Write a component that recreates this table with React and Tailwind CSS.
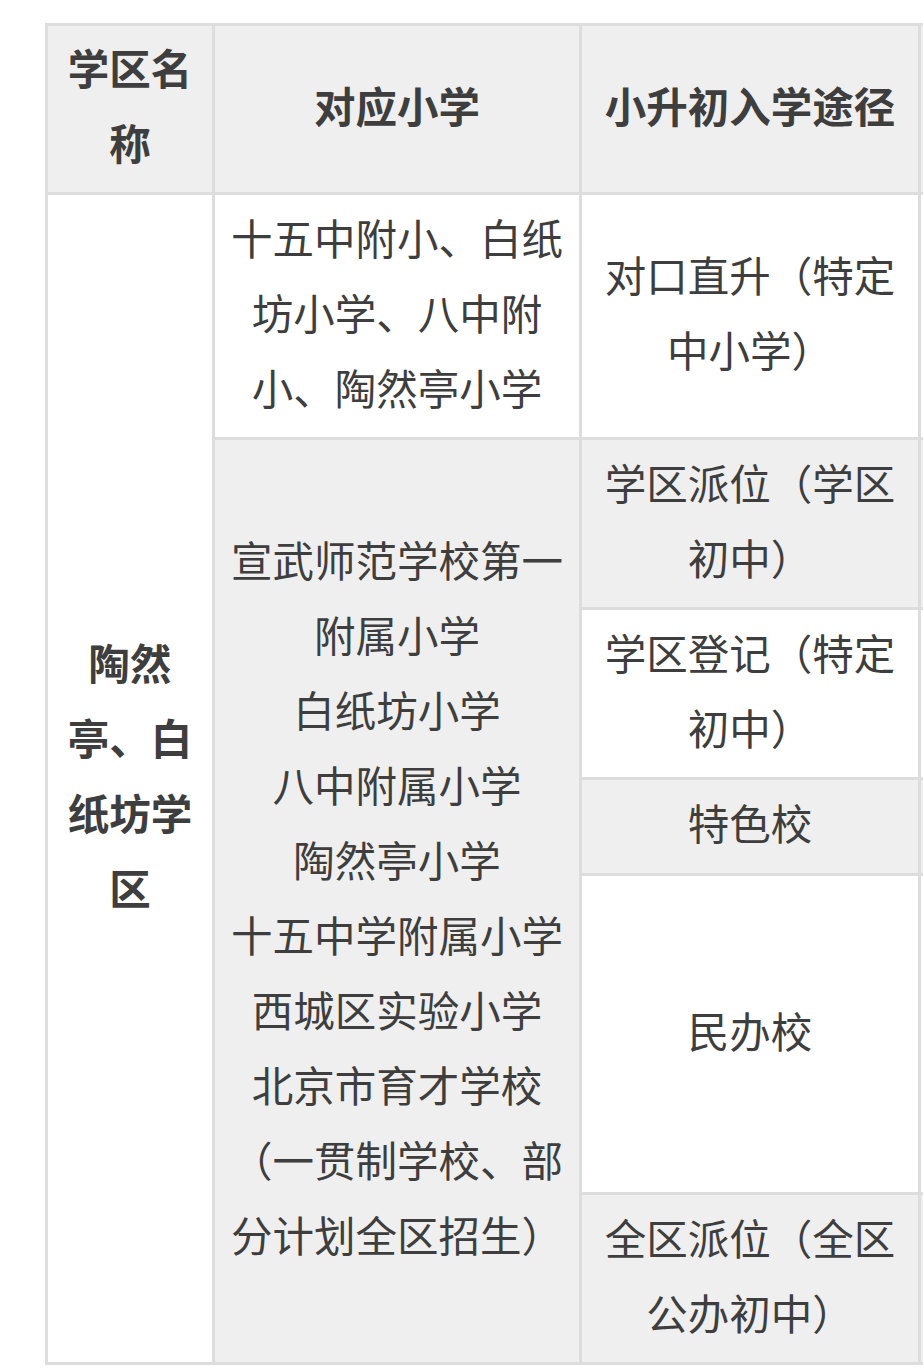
import React from 'react'

const font = { fontFamily: '"Noto Sans CJK SC", "Noto Sans", sans-serif' }

// stripe colours per row: header + 6 body rows
const GRAY = 'bg-[#efefef]'
const WHITE = 'bg-white'

function Cell({ className = '', children }) {
  return (
    <div className={`flex flex-col items-center justify-center px-[15px] pb-[8px] text-center text-[41.5px] leading-[75px] text-[#3e3e3e] ${className}`}>
      {children}
    </div>
  )
}

export default function App() {
  return (
    <div className="w-[923px] h-[1370px] overflow-hidden bg-white pl-[45px] pt-[23px]" style={font}>
      <div className="grid w-max gap-[3px] bg-[#dddddd] p-[3px] grid-cols-[164px_364px_336px_200px] grid-rows-[166px_242px_167px_167px_93px_316px_167px]">
        {/* header */}
        <Cell className={`${GRAY} font-bold col-start-1 row-start-1`}>学区名称</Cell>
        <Cell className={`${GRAY} font-bold col-start-2 row-start-1`}>对应小学</Cell>
        <Cell className={`${GRAY} font-bold col-start-3 row-start-1`}>小升初入学途径</Cell>
        <Cell className={`${GRAY} col-start-4 row-start-1`} />

        {/* district name spans every body row */}
        <Cell className={`${WHITE} font-bold col-start-1 row-start-2 row-span-6`}>陶然亭、白纸坊学区</Cell>

        {/* row 1 */}
        <Cell className={`${WHITE} col-start-2 row-start-2`}>十五中附小、白纸坊小学、八中附小、陶然亭小学</Cell>
        <Cell className={`${WHITE} col-start-3 row-start-2`}>对口直升（特定中小学）</Cell>
        <Cell className={`${WHITE} col-start-4 row-start-2`} />

        {/* schools list spans rows 2-6 */}
        <Cell className={`${GRAY} col-start-2 row-start-3 row-span-5`}>
          <span>宣武师范学校第一附属小学</span>
          <span>白纸坊小学</span>
          <span>八中附属小学</span>
          <span>陶然亭小学</span>
          <span>十五中学附属小学</span>
          <span>西城区实验小学</span>
          <span>北京市育才学校（一贯制学校、部分计划全区招生）</span>
        </Cell>

        <Cell className={`${GRAY} col-start-3 row-start-3`}>学区派位（学区初中）</Cell>
        <Cell className={`${GRAY} col-start-4 row-start-3`} />

        <Cell className={`${WHITE} col-start-3 row-start-4`}>学区登记（特定初中）</Cell>
        <Cell className={`${WHITE} col-start-4 row-start-4`} />

        <Cell className={`${GRAY} col-start-3 row-start-5`}>特色校</Cell>
        <Cell className={`${GRAY} col-start-4 row-start-5`} />

        <Cell className={`${WHITE} col-start-3 row-start-6`}>民办校</Cell>
        <Cell className={`${WHITE} col-start-4 row-start-6`} />

        <Cell className={`${GRAY} col-start-3 row-start-7`}>全区派位（全区公办初中）</Cell>
        <Cell className={`${GRAY} col-start-4 row-start-7`} />
      </div>
    </div>
  )
}
